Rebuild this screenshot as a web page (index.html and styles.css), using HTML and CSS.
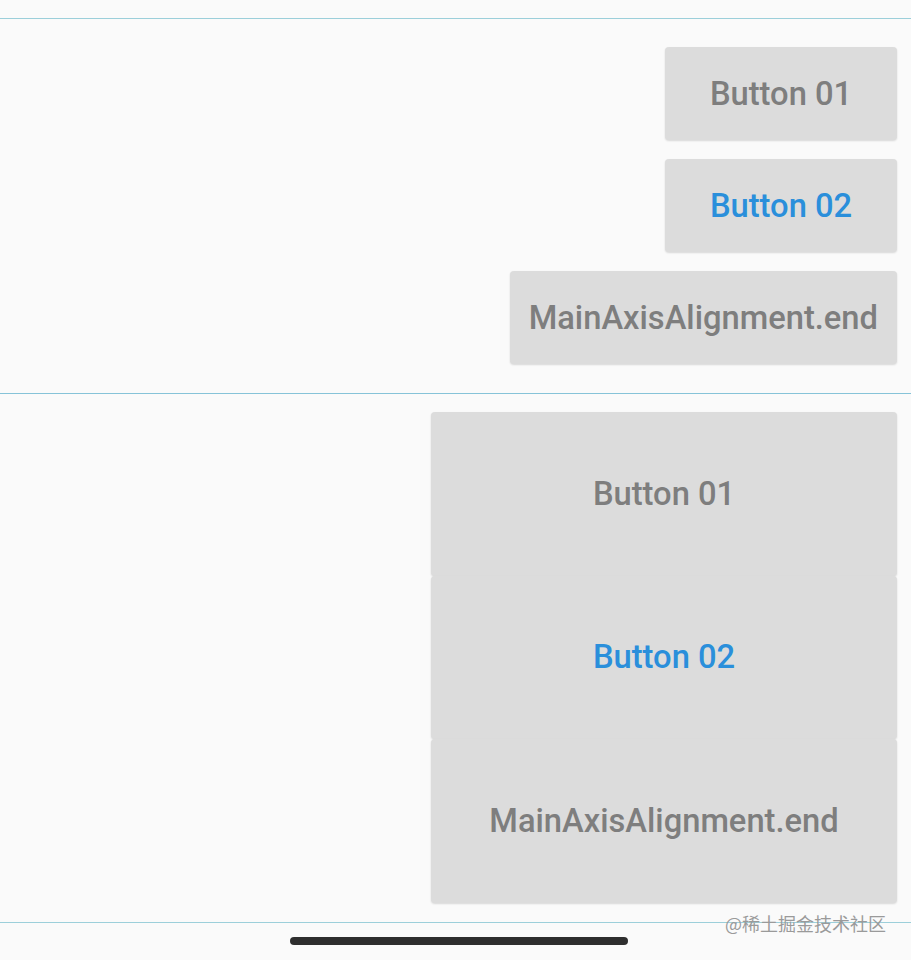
FILE: index.html
```html
<!DOCTYPE html>
<html lang="en">
<head>
    <meta charset="UTF-8">
    <meta name="viewport" content="width=device-width, initial-scale=1.0">
    <title>MainAxisAlignment.end</title>
    <link rel="stylesheet" href="styles.css">
</head>
<body>

    <div class="screen">
        <div class="top-space"></div>

        <section class="column-box">
            <button class="btn">Button 01</button>
            <button class="btn btn-blue">Button 02</button>
            <button class="btn">MainAxisAlignment.end</button>
        </section>

        <section class="stretch-box">
            <button class="btn">Button 01</button>
            <button class="btn btn-blue">Button 02</button>
            <button class="btn">MainAxisAlignment.end</button>
        </section>

        <div class="home-bar">
            <span class="indicator"></span>
        </div>

        <div class="watermark">@稀土掘金技术社区</div>
    </div>

</body>
</html>
```

FILE: styles.css
```css
body {
    margin: 0;
    background-color: #fafafa;
    font-family: Roboto, "Noto Sans CJK SC", sans-serif;
}
.screen {
    position: relative;
    width: 911px;
    height: 960px;
    overflow: hidden;
}
.top-space {
    height: 18px;
}
.btn {
    font-family: Roboto, sans-serif;
    font-size: 32.7px;
    font-weight: 500;
    color: #7e7e7e;
    background: #dcdcdc;
    border: none;
    border-radius: 4px;
    box-shadow: 0 1px 2px rgba(0, 0, 0, 0.14);
    padding: 0 19px;
    cursor: pointer;
}
.btn-blue {
    color: #2a8fdb;
}
.column-box {
    border-top: 1px solid #9ccfda;
    padding: 28px 14px 29px 0;
    display: flex;
    flex-direction: column;
    align-items: flex-end;
    gap: 19px;
}
.column-box .btn {
    min-width: 232px;
    height: 93px;
}
.stretch-box {
    border-top: 1px solid #86c3d8;
    border-bottom: 1px solid #9ccfda;
    padding: 18px 14px 19px 0;
    display: flex;
    flex-direction: column;
    align-items: flex-end;
}
.stretch-box .btn {
    width: 466px;
    height: 163.5px;
}
.home-bar {
    display: flex;
    justify-content: center;
    padding: 14px 0 0 6px;
}
.indicator {
    display: block;
    width: 338px;
    height: 8px;
    border-radius: 4px;
    background: #2e2e2e;
}
.watermark {
    position: absolute;
    right: 25px;
    top: 910px;
    font-family: "Noto Sans CJK SC", sans-serif;
    font-size: 18px;
    color: #9a9a9a;
}
```
